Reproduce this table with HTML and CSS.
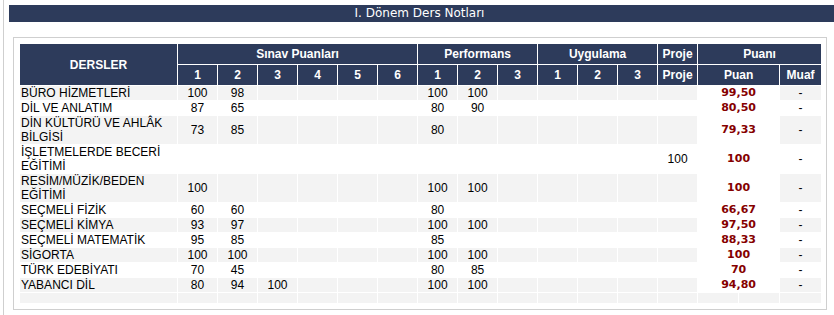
FILE: index.html
```html
<!DOCTYPE html>
<html lang="tr">
<head>
<meta charset="utf-8">
<link rel="stylesheet" href="styles.css">
</head>
<body>
<div class="wrap">
  <div class="title-bar">I. Dönem Ders Notları</div>
  <div class="box">
    <table class="grades">
      <colgroup>
        <col class="c-ders">
        <col class="c-n"><col class="c-n"><col class="c-n"><col class="c-n"><col class="c-n"><col class="c-n">
        <col class="c-n"><col class="c-n"><col class="c-n">
        <col class="c-n"><col class="c-n"><col class="c-n">
        <col class="c-n">
        <col class="c-p"><col class="c-p">
        <col class="c-m">
      </colgroup>
      <thead>
        <tr class="h1">
          <th rowspan="2">DERSLER</th>
          <th colspan="6">Sınav Puanları</th>
          <th colspan="3">Performans</th>
          <th colspan="3">Uygulama</th>
          <th>Proje</th>
          <th colspan="3">Puanı</th>
        </tr>
        <tr class="h2">
          <th>1</th><th>2</th><th>3</th><th>4</th><th>5</th><th>6</th>
          <th>1</th><th>2</th><th>3</th>
          <th>1</th><th>2</th><th>3</th>
          <th>Proje</th>
          <th colspan="2">Puan</th>
          <th>Muaf</th>
        </tr>
      </thead>
      <tbody>
        <tr class="alt">
          <td class="ders">BÜRO HİZMETLERİ</td>
          <td>100</td><td>98</td><td></td><td></td><td></td><td></td>
          <td>100</td><td>100</td><td></td>
          <td></td><td></td><td></td>
          <td></td>
          <td class="puan" colspan="2">99,50</td>
          <td>-</td>
        </tr>
        <tr>
          <td class="ders">DİL VE ANLATIM</td>
          <td>87</td><td>65</td><td></td><td></td><td></td><td></td>
          <td>80</td><td>90</td><td></td>
          <td></td><td></td><td></td>
          <td></td>
          <td class="puan" colspan="2">80,50</td>
          <td>-</td>
        </tr>
        <tr class="alt">
          <td class="ders">DİN KÜLTÜRÜ VE AHLÂK BİLGİSİ</td>
          <td>73</td><td>85</td><td></td><td></td><td></td><td></td>
          <td>80</td><td></td><td></td>
          <td></td><td></td><td></td>
          <td></td>
          <td class="puan" colspan="2">79,33</td>
          <td>-</td>
        </tr>
        <tr>
          <td class="ders">İŞLETMELERDE BECERİ EĞİTİMİ</td>
          <td></td><td></td><td></td><td></td><td></td><td></td>
          <td></td><td></td><td></td>
          <td></td><td></td><td></td>
          <td>100</td>
          <td class="puan" colspan="2">100</td>
          <td>-</td>
        </tr>
        <tr class="alt">
          <td class="ders">RESİM/MÜZİK/BEDEN EĞİTİMİ</td>
          <td>100</td><td></td><td></td><td></td><td></td><td></td>
          <td>100</td><td>100</td><td></td>
          <td></td><td></td><td></td>
          <td></td>
          <td class="puan" colspan="2">100</td>
          <td>-</td>
        </tr>
        <tr>
          <td class="ders">SEÇMELİ FİZİK</td>
          <td>60</td><td>60</td><td></td><td></td><td></td><td></td>
          <td>80</td><td></td><td></td>
          <td></td><td></td><td></td>
          <td></td>
          <td class="puan" colspan="2">66,67</td>
          <td>-</td>
        </tr>
        <tr class="alt">
          <td class="ders">SEÇMELİ KİMYA</td>
          <td>93</td><td>97</td><td></td><td></td><td></td><td></td>
          <td>100</td><td>100</td><td></td>
          <td></td><td></td><td></td>
          <td></td>
          <td class="puan" colspan="2">97,50</td>
          <td>-</td>
        </tr>
        <tr>
          <td class="ders">SEÇMELİ MATEMATİK</td>
          <td>95</td><td>85</td><td></td><td></td><td></td><td></td>
          <td>85</td><td></td><td></td>
          <td></td><td></td><td></td>
          <td></td>
          <td class="puan" colspan="2">88,33</td>
          <td>-</td>
        </tr>
        <tr class="alt">
          <td class="ders">SİGORTA</td>
          <td>100</td><td>100</td><td></td><td></td><td></td><td></td>
          <td>100</td><td>100</td><td></td>
          <td></td><td></td><td></td>
          <td></td>
          <td class="puan" colspan="2">100</td>
          <td>-</td>
        </tr>
        <tr>
          <td class="ders">TÜRK EDEBİYATI</td>
          <td>70</td><td>45</td><td></td><td></td><td></td><td></td>
          <td>80</td><td>85</td><td></td>
          <td></td><td></td><td></td>
          <td></td>
          <td class="puan" colspan="2">70</td>
          <td>-</td>
        </tr>
        <tr class="alt">
          <td class="ders">YABANCI DİL</td>
          <td>80</td><td>94</td><td>100</td><td></td><td></td><td></td>
          <td>100</td><td>100</td><td></td>
          <td></td><td></td><td></td>
          <td></td>
          <td class="puan" colspan="2">94,80</td>
          <td>-</td>
        </tr>
        <tr class="alt empty">
          <td></td>
          <td></td><td></td><td></td><td></td><td></td><td></td>
          <td></td><td></td><td></td>
          <td></td><td></td><td></td>
          <td></td>
          <td></td><td></td>
          <td></td>
        </tr>
      </tbody>
    </table>
  </div>
</div>
</body>
</html>
```

FILE: styles.css
```css
html, body {
  margin: 0;
  padding: 0;
  background: #ffffff;
  overflow: hidden;
}

.wrap {
  margin-left: 3px;
  border-left: 1px solid #cfcfcf;
  padding: 5px 0 0 5px;
  min-height: 315px;
  box-sizing: border-box;
  width: 840px;
}

.title-bar {
  background: #2d3b5b;
  color: #ffffff;
  font-family: "DejaVu Sans", Verdana, sans-serif;
  font-size: 12px;
  height: 17px;
  line-height: 17px;
  text-align: center;
  padding-right: 10px;
  width: 821px;
}

.box {
  margin: 15px 0 0 4px;
  width: 814px;
  box-sizing: border-box;
  border: 1px solid #cfcfcf;
  padding: 5px;
}

.grades {
  width: 802px;
  table-layout: fixed;
  border-collapse: separate;
  border-spacing: 1px;
  font-family: "Liberation Sans", Arial, sans-serif;
  font-size: 12px;
  color: #000000;
}

.c-ders { width: 157px; }
.c-n { width: 39px; }
.c-p { width: 40px; }
.c-m { width: 41px; }

.grades th {
  background: #2d3b5b;
  color: #ffffff;
  font-weight: bold;
  height: 20px;
  padding: 0;
  text-align: center;
  vertical-align: middle;
  line-height: 14px;
}

.grades td {
  padding: 0;
  height: 14px;
  line-height: 14px;
  text-align: center;
  vertical-align: middle;
}

.grades td.ders {
  text-align: left;
  padding-left: 1px;
}

.grades tr.alt td {
  background: #f3f3f3;
}

.grades td.puan,
.grades tr.alt td.puan {
  background: #ffffff;
  color: #850000;
  font-family: "DejaVu Sans", Verdana, sans-serif;
  font-size: 11px;
  font-weight: bold;
}

.grades tr.empty td {
  height: 10px;
  line-height: 10px;
}
```
